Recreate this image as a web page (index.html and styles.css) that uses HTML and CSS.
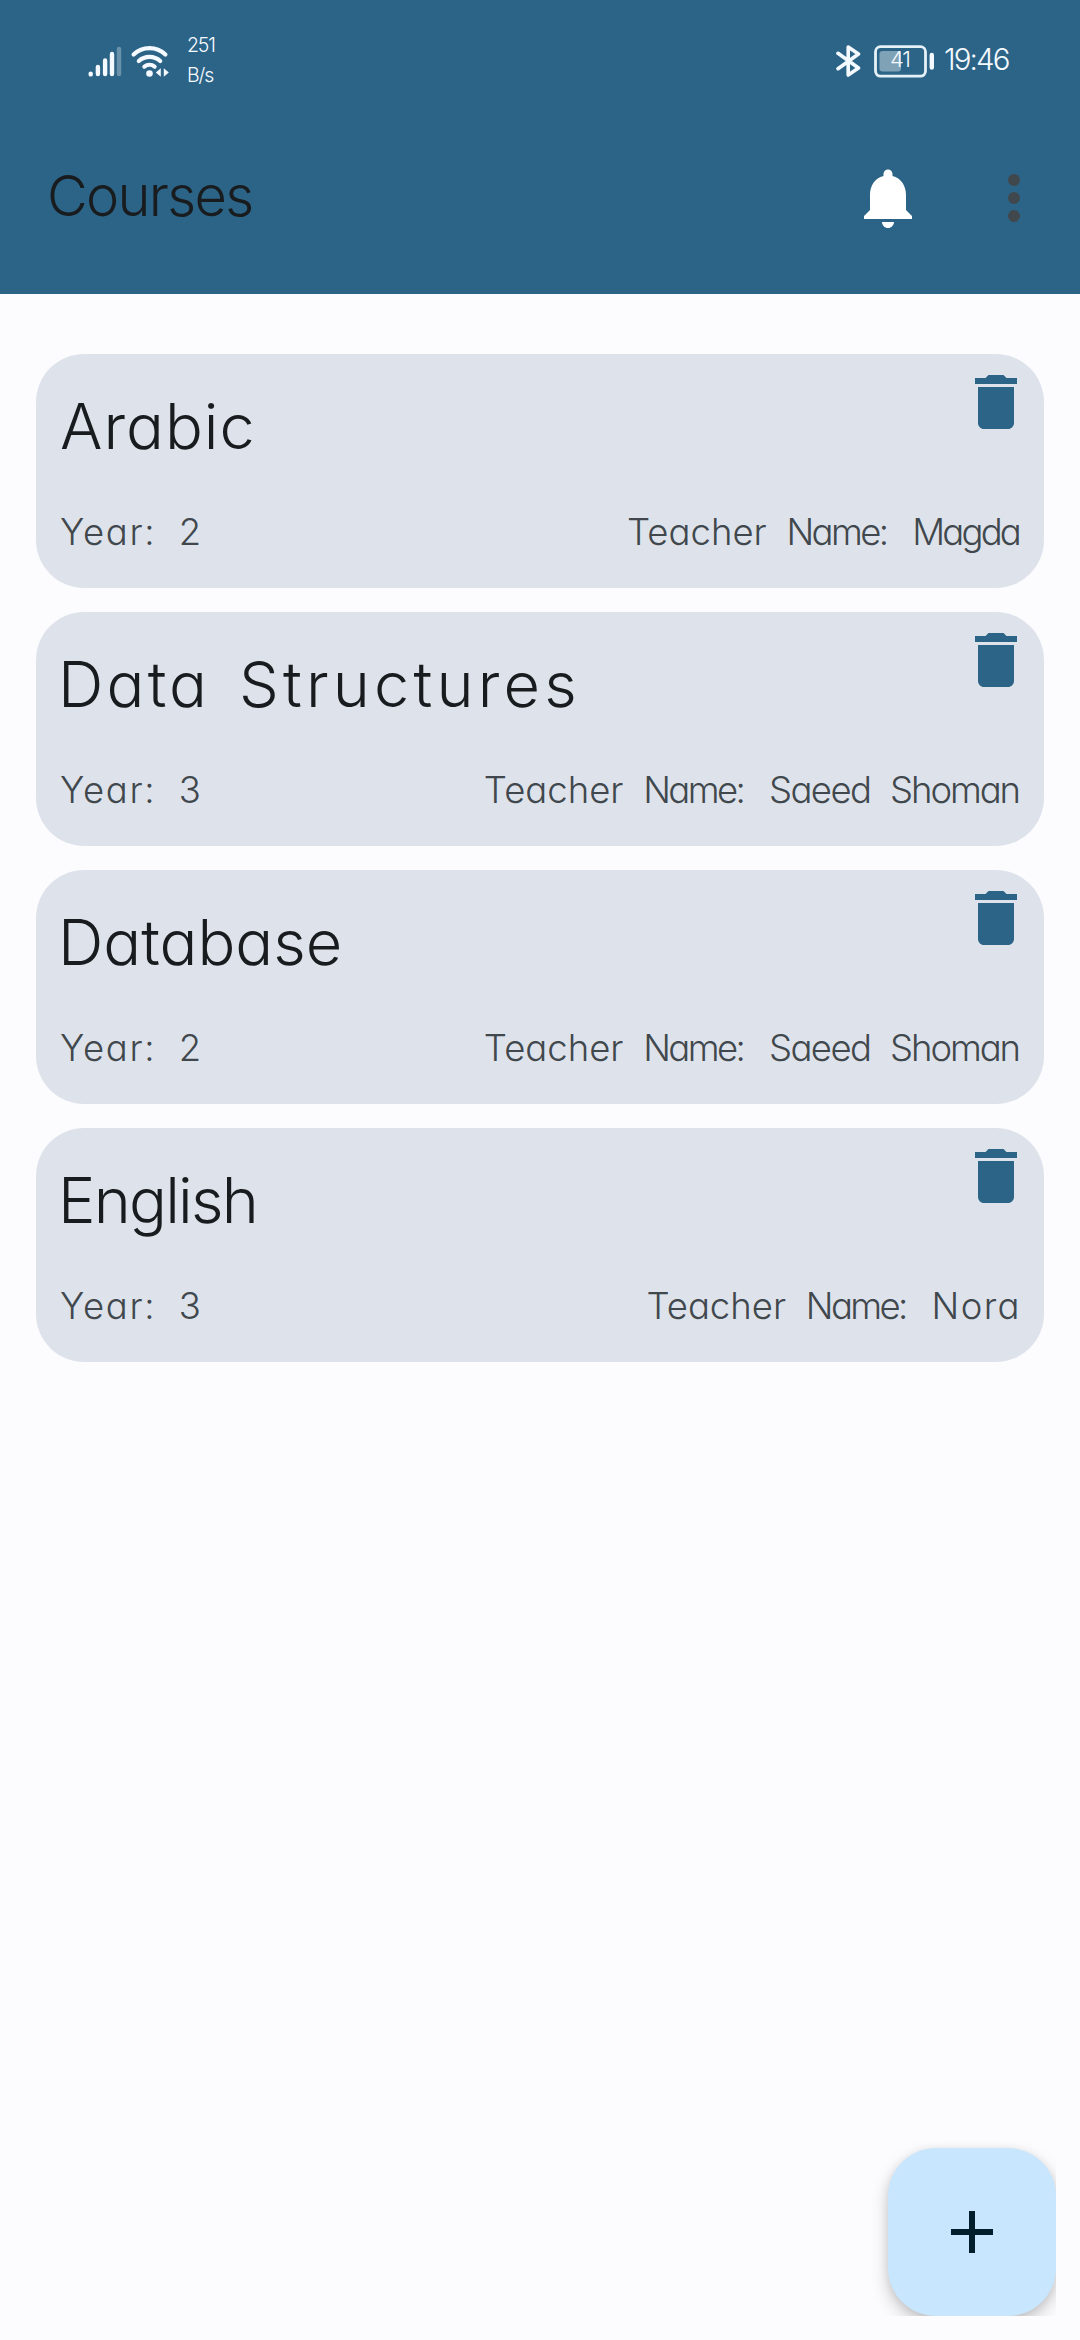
FILE: index.html
```html
<!DOCTYPE html>
<html lang="en">
<head>
<meta charset="utf-8">
<title>Courses</title>
<link rel="stylesheet" href="styles.css">
</head>
<body>
<svg class="defs" aria-hidden="true">
  <symbol id="trash" viewBox="0 0 24 24"><path d="M6 19c0 1.1.9 2 2 2h8c1.1 0 2-.9 2-2V7H6v12zM19 4h-3.5l-1-1h-5l-1 1H5v2h14V4z"/></symbol>
</svg>
<div class="screen">
  <header class="header">
    <div class="status">
      <svg class="signal" viewBox="0 0 34 34" aria-label="Signal">
        <g stroke="#f4faff" stroke-width="4.4" stroke-linecap="round">
          <path d="M4.7 30.4v-.8M11.9 30v-7M19.1 30V16.5M26 30V10"/>
        </g>
        <path d="M33 30V5" stroke="#fff" stroke-opacity=".3" stroke-width="4.4" stroke-linecap="round"/>
      </svg>
      <svg class="wifi" viewBox="0 0 42 34" aria-label="Wi-Fi">
        <g fill="none" stroke="#f4faff" stroke-width="4.2" stroke-linecap="round">
          <path d="M3.6 11.6a23 23 0 0 1 31.8 0"/>
          <path d="M8.8 18a16 16 0 0 1 21.4 0"/>
          <path d="M14.4 23.6a8.4 8.4 0 0 1 10.2 0"/>
        </g>
        <circle cx="19.5" cy="30.5" r="3.3" fill="#f4faff"/>
        <path d="M25.8 29.5l5-4.2v8.4zM33.8 25.3l5 4.2-5 4.2z" fill="#f4faff"/>
      </svg>
      <div class="speed"><span>251</span><span>B/s</span></div>
      <div class="spacer"></div>
      <svg class="bluetooth" viewBox="0 0 26 32" aria-label="Bluetooth">
        <path d="M2 8.3L22.5 23 12.2 30V2l10.3 7L2 23.7" fill="none" stroke="#f4faff" stroke-width="3.6" stroke-linecap="round" stroke-linejoin="round"/>
      </svg>
      <svg class="battery" viewBox="0 0 62 33" aria-label="Battery">
        <rect x="1.5" y="1.7" width="50" height="29.4" rx="5" fill="none" stroke="#e6f0f7" stroke-width="2.8"/>
        <rect x="5.5" y="6" width="21.5" height="20.5" rx="3" fill="#fff" fill-opacity=".4"/>
        <path d="M57.8 10v12.5" stroke="#f4faff" stroke-width="4.4" stroke-linecap="round"/>
        <text x="16" y="21.6" class="level">41</text>
      </svg>
      <span class="time">19:46</span>
    </div>
    <div class="toolbar">
      <h1 class="page-title">Courses</h1>
      <svg class="bell" viewBox="0 0 24 24" fill="#fff" aria-label="Notifications"><path d="M12 22c1.1 0 2-.9 2-2h-4c0 1.1.89 2 2 2zm6-6v-5c0-3.07-1.64-5.64-4.5-6.32V4c0-.83-.67-1.5-1.5-1.5s-1.5.67-1.5 1.5v.68C7.63 5.36 6 7.92 6 11v5l-2 2v1h16v-1l-2-2z"/></svg>
      <svg class="more" viewBox="0 0 24 24" fill="#41484d" aria-label="More"><circle cx="12" cy="6" r="2"/><circle cx="12" cy="12" r="2"/><circle cx="12" cy="18" r="2"/></svg>
    </div>
  </header>

  <main class="courses">
    <article class="card">
      <div class="card-top"><h2 class="name arabic">Arabic</h2><svg class="delete"><use href="#trash"/></svg></div>
      <div class="meta"><p><span class="year">Year:</span> 2</p><p><span class="teacher">Teacher</span> <span class="label">Name:</span> <span class="magda">Magda</span></p></div>
    </article>
    <article class="card">
      <div class="card-top"><h2 class="name"><span class="data">Data</span> <span class="structures">Structures</span></h2><svg class="delete"><use href="#trash"/></svg></div>
      <div class="meta"><p><span class="year">Year:</span> 3</p><p><span class="teacher">Teacher</span> <span class="label">Name:</span> <span class="saeed">Saeed</span> <span class="shoman">Shoman</span></p></div>
    </article>
    <article class="card">
      <div class="card-top"><h2 class="name database">Database</h2><svg class="delete"><use href="#trash"/></svg></div>
      <div class="meta"><p><span class="year">Year:</span> 2</p><p><span class="teacher">Teacher</span> <span class="label">Name:</span> <span class="saeed">Saeed</span> <span class="shoman">Shoman</span></p></div>
    </article>
    <article class="card">
      <div class="card-top"><h2 class="name english">English</h2><svg class="delete"><use href="#trash"/></svg></div>
      <div class="meta"><p><span class="year">Year:</span> 3</p><p><span class="teacher">Teacher</span> <span class="label">Name:</span> <span class="nora">Nora</span></p></div>
    </article>
  </main>

  <div class="fab-area">
    <button class="fab" aria-label="Add course"><svg viewBox="0 0 24 24" fill="#001e2c"><path d="M19 13h-6v6h-2v-6H5v-2h6V5h2v6h6v2z"/></svg></button>
  </div>
</div>
</body>
</html>
```
FILE: styles.css
```css
* { box-sizing: border-box; margin: 0; padding: 0; }

body {
  background: #fcfcff;
  font-family: Inter, "Open Sans", sans-serif;
  font-weight: 300;
  /* single-storey "a" */
  font-feature-settings: "cv11";
}

.defs { display: none; }

.screen {
  width: 1080px;
  height: 2340px;
  display: flex;
  flex-direction: column;
  overflow: hidden;
}

/* Header */
.header { height: 294px; background: #2c6487; flex: none; }

.status {
  height: 102px;
  padding: 0 70px 0 86px;
  display: flex;
  align-items: flex-start;
  color: #f4faff;
  font-weight: 300;
}
.signal { width: 34px; height: 34px; margin-top: 44px; overflow: visible; }
.wifi { width: 42px; height: 34px; margin: 43px 0 0 10px; }
.speed {
  display: flex;
  flex-direction: column;
  margin: 30px 0 0 15px;
  font-size: 19.5px;
  line-height: 30px;
  letter-spacing: -1.1px;
}
.spacer { flex: 1; }
.bluetooth { width: 26px; height: 32px; margin: 45px 12px 0 0; }
.battery { width: 62px; height: 33px; margin-top: 45px; }
.level { font-size: 22px; fill: #f4faff; letter-spacing: -1.2px; }
.time {
  width: 66px;
  margin: 41px 0 0 8px;
  font-size: 29.5px;
  line-height: 36px;
  letter-spacing: -1.9px;
  white-space: nowrap;
}

.toolbar {
  height: 192px;
  padding: 0 30px 0 47px;
  display: flex;
  align-items: center;
}
.page-title {
  flex: 1;
  padding-bottom: 4px;
  color: #191c1e;
  font-size: 56px;
  font-weight: 300;
  letter-spacing: -1.7px;
}
.bell { width: 72px; height: 72px; margin-right: 54px; }
.more { width: 72px; height: 72px; }

/* Course list */
.courses {
  padding: 60px 36px 0;
  display: flex;
  flex-direction: column;
  gap: 24px;
}
.card {
  height: 234px;
  padding: 12px 12px 32px 24px;
  display: flex;
  flex-direction: column;
  justify-content: space-between;
  border-radius: 48px;
  background: #dee3eb;
}
.card-top { display: flex; justify-content: space-between; }
.name {
  margin: 18px 0 0 -2px;
  color: #191c1e;
  font-size: 63px;
  font-weight: 300;
  line-height: 84px;
  word-spacing: 11px;
}
.delete { width: 72px; height: 72px; fill: #2c6487; }
.meta {
  display: flex;
  justify-content: space-between;
  padding-right: 13px;
  color: #41484d;
  font-size: 36.5px;
  line-height: 48px;
  word-spacing: 9.5px;
  white-space: nowrap;
}

/* Word-level tracking */
.name.arabic { letter-spacing: 1px; margin-left: 0; }
.data { letter-spacing: 3.2px; }
.structures { letter-spacing: 4.2px; }
.database { letter-spacing: 0; }
.english { letter-spacing: -1.8px; }
.year { letter-spacing: 1.6px; margin-right: 3px; }
.teacher { letter-spacing: 0; }
.label { letter-spacing: -2.6px; margin-right: 6px; }
.magda { letter-spacing: -2.8px; }
.saeed { letter-spacing: -1.6px; }
.shoman { letter-spacing: -2.1px; }
.nora { letter-spacing: 1.4px; margin-right: -2px; }

/* Floating add button; its area clips the shadow on the right and bottom */
.fab-area {
  align-self: flex-end;
  width: 204px;
  height: 204px;
  margin: auto 24px 24px 0;
  padding: 36px 0 0 36px;
  overflow: hidden;
}
.fab {
  width: 168px;
  height: 168px;
  display: flex;
  align-items: center;
  justify-content: center;
  border: 0;
  border-radius: 48px;
  background: #c8e6fd;
  box-shadow: 0 8px 18px rgba(0, 0, 0, 0.2), 0 2px 8px rgba(0, 0, 0, 0.08);
}
.fab svg { width: 72px; height: 72px; }
```
